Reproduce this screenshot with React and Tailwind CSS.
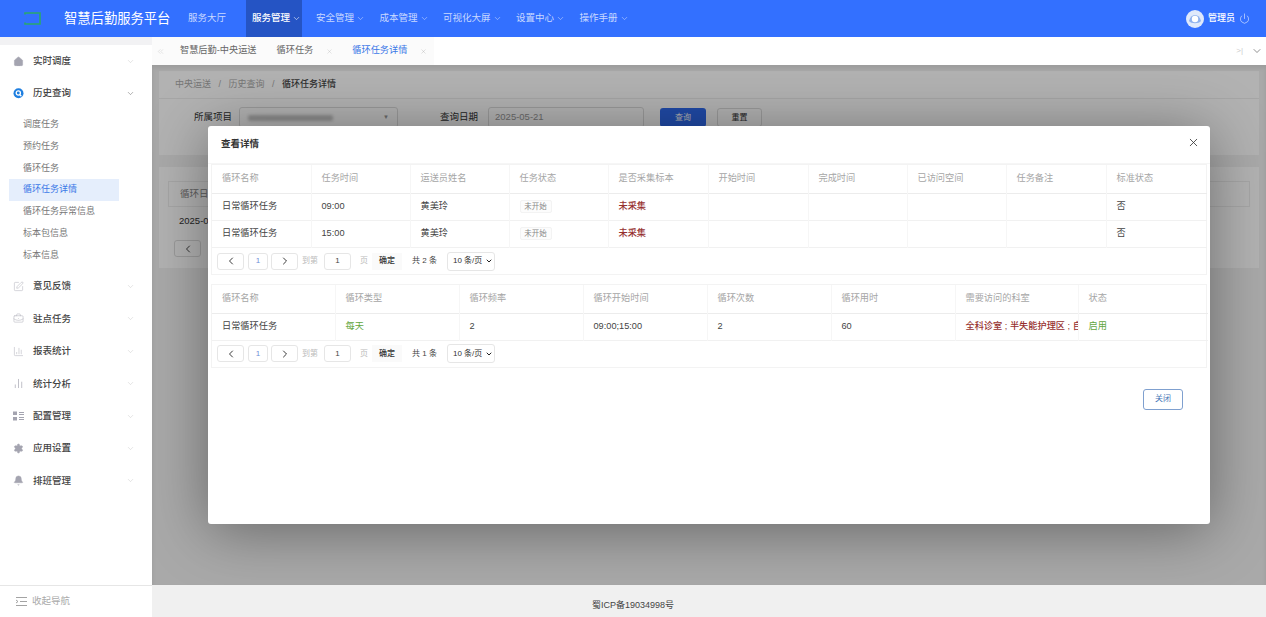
import React from "react";
import { ChevronDown, ChevronLeft, ChevronRight, X, Power, Home, SquarePen, BriefcaseBusiness, ChartColumn, ChartNoAxesColumn, Settings, Bell, ChevronsLeft } from "lucide-react";

const FONT = "font-['Liberation_Sans','Noto_Sans_CJK_SC',sans-serif]";

function Logo() {
  return (
    <svg width="17" height="13" viewBox="0 0 17 13" fill="none" stroke="#2aa86c" strokeWidth="1.6">
      <path d="M1 2.5V1h15v11H1v-1.5" />
      <path d="M2 6.5h.1" />
    </svg>
  );
}

function Avatar() {
  return (
    <svg width="18" height="18" viewBox="0 0 18 18">
      <circle cx="9" cy="9" r="9" fill="#dfe9fb" />
      <path d="M3 11c1-4 3-6 6-6s5 2 6 6c-2 3-10 3-12 0z" fill="#8fb2ee" />
      <circle cx="9" cy="9" r="3.2" fill="#ffffff" />
    </svg>
  );
}

function QueryIcon() {
  return (
    <svg width="11" height="11" viewBox="0 0 11 11">
      <circle cx="5.5" cy="5.2" r="5" fill="#1f7fe0" />
      <circle cx="5.3" cy="5" r="2.1" fill="none" stroke="#fff" strokeWidth="1.3" />
      <path d="M6.8 6.8l1.6 1.5" stroke="#fff" strokeWidth="1.2" />
    </svg>
  );
}

function NavMenu({ label, active, open }) {
  return (
    <div className={`flex h-full items-center gap-[2px] text-[9.5px] ${active ? "w-[56px] bg-[#2554c4] pl-[6px] font-medium text-white" : "text-[#c9d9ff]"}`}>
      <span>{label}</span>
      {open && <ChevronDown size={9} strokeWidth={1.5} />}
    </div>
  );
}

function SideItem({ icon, label, open }) {
  return (
    <div className="flex h-[32.4px] items-center pl-[13px] pr-[17px]">
      <span className="flex w-[20px] items-center text-[#a4a4b0]">{icon}</span>
      <span className="flex-1 text-[9.5px] font-medium text-[#444]">{label}</span>
      <ChevronDown size={9} strokeWidth={1.2} className={open ? "text-[#555]" : "text-[#c4c4c4]"} />
    </div>
  );
}

function SubItem({ label, active }) {
  return (
    <div className={`ml-[9px] flex h-[21.8px] w-[110px] items-center pl-[14px] text-[9px] ${active ? "bg-[#e5eefc] text-[#3b78e7]" : "text-[#777]"}`}>
      {label}
    </div>
  );
}

function Sidebar() {
  const s = 11;
  return (
    <aside className="flex w-[152px] shrink-0 flex-col border-t-[8px] border-[#f2f2f4] bg-white">
      <div className="flex-1">
        <SideItem icon={<Home size={s} fill="#a4a4b0" strokeWidth={1} />} label="实时调度" />
        <SideItem icon={<QueryIcon />} label="历史查询" open />
        <div className="pt-[4px]">
          <SubItem label="调度任务" />
          <SubItem label="预约任务" />
          <SubItem label="循环任务" />
          <SubItem label="循环任务详情" active />
          <SubItem label="循环任务异常信息" />
          <SubItem label="标本包信息" />
          <SubItem label="标本信息" />
        </div>
        <div className="pt-[4px]">
          <SideItem icon={<SquarePen size={s} strokeWidth={1} />} label="意见反馈" />
          <SideItem icon={<BriefcaseBusiness size={s} strokeWidth={1} />} label="驻点任务" />
          <SideItem icon={<ChartColumn size={s} strokeWidth={1} />} label="报表统计" />
          <SideItem icon={<ChartNoAxesColumn size={s} strokeWidth={1.5} />} label="统计分析" />
          <SideItem
            icon={
              <svg width="11" height="10" viewBox="0 0 11 10" fill="#a4a4b0">
                <rect x="0" y="0.5" width="4" height="3.5" />
                <rect x="0" y="6" width="4" height="3.5" />
                <rect x="6" y="1" width="5" height="1" />
                <rect x="6" y="3" width="5" height="1" />
                <rect x="6" y="6" width="5" height="1" />
                <rect x="6" y="8" width="5" height="1" />
              </svg>
            }
            label="配置管理"
          />
          <SideItem icon={<Settings size={s} fill="#a4a4b0" strokeWidth={1} />} label="应用设置" />
          <SideItem icon={<Bell size={s} fill="#a4a4b0" strokeWidth={1} />} label="排班管理" />
        </div>
      </div>
      <div className="flex h-[32px] items-center gap-[5px] border-t border-[#e6e6e6] pl-[16px] text-[9.5px] text-[#aaa]">
        <svg width="11" height="9" viewBox="0 0 11 9" fill="none" stroke="#999" strokeWidth="0.9">
          <path d="M0 .5h11M4 4.5h7M0 8.5h11M0 3l2 1.5L0 6" />
        </svg>
        <span>收起导航</span>
      </div>
    </aside>
  );
}

function Pager({ total }) {
  const box = "flex h-[17px] items-center justify-center rounded-[3px] border border-[#e6e6e6] bg-white";
  return (
    <div className="flex h-full items-center pl-[5px] text-[8px] text-[#bbb]">
      <span className={`${box} w-[27px] text-[#222]`}><ChevronLeft size={12} strokeWidth={1.8} /></span>
      <span className={`${box} ml-[4px] w-[20px] text-[#6f8fd8]`}>1</span>
      <span className={`${box} ml-[3px] w-[27px] text-[#222]`}><ChevronRight size={12} strokeWidth={1.8} /></span>
      <span className="ml-[4px] w-[22px]">到第</span>
      <span className={`${box} w-[27px] text-[#444]`}>1</span>
      <span className="ml-[9px] w-[12px]">页</span>
      <span className="flex h-[17px] w-[30px] items-center justify-center bg-[#fafafa] font-medium text-[#333]">确定</span>
      <span className="ml-[10px] w-[35px] text-[#444]">共 {total} 条</span>
      <div className="relative h-[19px] w-[48px]">
        <select className="h-full w-full appearance-none rounded-[3px] border border-[#e6e6e6] bg-white pl-[5px] text-[8px] text-[#333]">
          <option>10 条/页</option>
        </select>
        <ChevronDown size={8} strokeWidth={3} className="pointer-events-none absolute top-[5.5px] right-[2px] text-[#222]" />
      </div>
    </div>
  );
}

function DataTable({ cols, head, rows, total, widthClass }) {
  return (
    <div className={`${widthClass} mx-[3px] border border-[#f3f3f3]`}>
      <table className="w-full table-fixed border-collapse text-[9.2px]">
        <colgroup>
          {cols.map((c, i) => (
            <col key={i} className={c} />
          ))}
        </colgroup>
        <thead>
          <tr className="h-[28px] border-b border-[#ececec]">
            {head.map((h, i) => (
              <th key={i} className="border-l border-[#f6f6f6] pl-[10px] text-left font-normal text-[#a6a6a6] first:border-l-0">
                {h}
              </th>
            ))}
          </tr>
        </thead>
        <tbody>
          {rows.map((r, i) => (
            <tr key={i} className="h-[27.3px] border-b border-[#f1f1f1]">
              {r.map((c, j) => (
                <td key={j} className="overflow-hidden border-l border-[#f6f6f6] pl-[10px] whitespace-nowrap text-[#444] first:border-l-0">
                  {c}
                </td>
              ))}
            </tr>
          ))}
        </tbody>
      </table>
      <div className="h-[26px]">
        <Pager total={total} />
      </div>
    </div>
  );
}

function Tag() {
  return <span className="inline-flex h-[13px] w-[32px] items-center justify-center rounded-[2px] border border-[#f3f3f3] bg-[#fcfcfc] text-[7.5px] text-[#888]">未开始</span>;
}
const Red = ({ children }) => <span className="font-medium text-[#96302e]">{children}</span>;
const Green = ({ children }) => <span className="text-[#62a63e]">{children}</span>;

function Modal() {
  const c1 = ["w-[99px]", "w-[99px]", "w-[99px]", "w-[99px]", "w-[100px]", "w-[100px]", "w-[99px]", "w-[99px]", "w-[100px]", "w-[101px]"];
  const c2 = ["w-[123px]", "w-[124px]", "w-[124px]", "w-[124px]", "w-[124px]", "w-[124px]", "w-[123px]", "w-[130px]"];
  const task = (t) => ["日常循环任务", t, "黄美玲", <Tag />, <Red>未采集</Red>, "", "", "", "", "否"];
  return (
    <div className="absolute top-[61px] left-[56px] flex h-[398px] w-[1002px] flex-col rounded-[3px] bg-white shadow-[0_6px_60px_rgba(0,0,0,0.4)]">
      <div className="flex h-[38px] shrink-0 items-center justify-between border-b border-[#f6f6f6] pr-[10px] pl-[13px]">
        <span className="text-[9.5px] font-semibold text-[#333]">查看详情</span>
        <X size={13} strokeWidth={1.5} className="mb-[4px] text-[#333]" />
      </div>
      <DataTable
        widthClass="w-[996px]"
        cols={c1}
        head={["循环名称", "任务时间", "运送员姓名", "任务状态", "是否采集标本", "开始时间", "完成时间", "已访问空间", "任务备注", "标准状态"]}
        rows={[task("09:00"), task("15:00")]}
        total={2}
      />
      <div className="h-[9px] shrink-0" />
      <DataTable
        widthClass="w-[996px]"
        cols={c2}
        head={["循环名称", "循环类型", "循环频率", "循环开始时间", "循环次数", "循环用时", "需要访问的科室", "状态"]}
        rows={[["日常循环任务", <Green>每天</Green>, "2", "09:00;15:00", "2", "60", <Red>全科诊室 ; 半失能护理区 ; 自</Red>, <Green>启用</Green>]]}
        total={1}
      />
      <div className="flex justify-end pt-[21px] pr-[27px]">
        <button className="h-[21px] w-[40px] rounded-[3px] border border-[#7fa0cf] bg-white text-[8px] text-[#4a78b8]">关闭</button>
      </div>
    </div>
  );
}

function Under() {
  return (
    <div className="flex h-full flex-col bg-[#f2f2f2] px-[7px] pt-[6px] text-[#333]">
      <div className="h-[84px] bg-white">
        <div className="flex h-[28px] items-center border-b border-[#eee] pl-[16px] text-[9px] text-[#aaa]">
          <span className="whitespace-pre">中央运送   /   历史查询   /   </span>
          <span className="font-medium text-[#444]">循环任务详情</span>
        </div>
        <div className="flex items-center pt-[8px] pl-[35px] text-[9.5px]">
          <span>所属项目</span>
          <div className="ml-[7px] flex h-[21px] w-[159px] items-center justify-between rounded-[3px] border border-[#ddd] px-[8px]">
            <span className="h-[6px] w-[85px] rounded-[2px] bg-[#c8c8c8] blur-[1.5px]" />
            <span className="text-[6px] text-[#999]">▼</span>
          </div>
          <span className="ml-[42px]">查询日期</span>
          <div className="ml-[10px] flex h-[21px] w-[156px] items-center rounded-[3px] border border-[#ddd] pl-[6px] text-[#999]">2025-05-21</div>
          <span className="ml-[16px] flex h-[19px] w-[46px] items-center justify-center rounded-[3px] bg-[#2f6bf0] text-[8px] text-white">查询</span>
          <span className="ml-[11px] flex h-[19px] w-[45px] items-center justify-center rounded-[3px] border border-[#ddd] text-[8px]">重置</span>
        </div>
      </div>
      <div className="mt-[12px] h-[101px] bg-white px-[9px] pt-[14px] text-[9.5px]">
        <div className="flex h-[26px] items-center border border-[#eee] pl-[11px] text-[#888]">循环日</div>
        <div className="flex h-[27px] items-center pt-[2px] pl-[11px]">2025-05-21</div>
        <span className="mt-[6px] ml-[6px] flex h-[17px] w-[27px] items-center justify-center rounded-[3px] border border-[#ddd]"><ChevronLeft size={12} strokeWidth={1.8} /></span>
      </div>
    </div>
  );
}

export default function App() {
  return (
    <div className={`${FONT} flex h-[617px] w-[1266px] flex-col overflow-hidden bg-white`}>
      <header className="flex h-[37px] shrink-0 items-center bg-[#3370ff] pr-[16px] text-white">
        <div className="flex w-[54px] justify-end pr-[13px]"><Logo /></div>
        <div className="ml-[10px] w-[124px] text-[13.3px] text-white">智慧后勤服务平台</div>
        <nav className="flex h-full items-center">
          <div className="flex h-full w-[58px] items-center"><NavMenu label="服务大厅" /></div>
          <NavMenu label="服务管理" active open />
          <div className="ml-[14px] flex h-full items-center gap-[14.5px]">
            <NavMenu label="安全管理" open />
            <NavMenu label="成本管理" open />
            <NavMenu label="可视化大屏" open />
            <NavMenu label="设置中心" open />
            <NavMenu label="操作手册" open />
          </div>
        </nav>
        <div className="ml-auto flex items-center gap-[4px]">
          <Avatar />
          <span className="text-[9px] font-medium">管理员</span>
          <Power size={11} strokeWidth={1.2} />
        </div>
      </header>
      <div className="flex min-h-0 flex-1">
        <Sidebar />
        <div className="flex min-w-0 flex-1 flex-col">
          <div className="flex h-[28px] shrink-0 items-center bg-white text-[9.2px]">
            <div className="flex h-full w-[282px] items-center bg-[#fbfbfb]">
              <ChevronsLeft size={9} strokeWidth={1} className="ml-[4px] text-[#bbb]" />
              <span className="ml-[15px] text-[#666]">智慧后勤-中央运送</span>
              <span className="ml-[20px] text-[#666]">循环任务</span>
              <X size={7} strokeWidth={1} className="ml-[13px] text-[#aaa]" />
              <span className="ml-[19px] text-[#3b78e7]">循环任务详情</span>
              <X size={7} strokeWidth={1} className="ml-[13px] text-[#999]" />
            </div>
            <div className="ml-auto flex items-center pr-[3px]">
              <span className="text-[8px] text-[#ccc]">&gt;|</span>
              <ChevronDown size={12} strokeWidth={1.3} className="ml-[8px] text-[#555]" />
            </div>
          </div>
          <main className="relative min-h-0 flex-1 overflow-hidden">
            <Under />
            <div className="absolute inset-0 bg-black/30 shadow-[inset_0_3px_4px_rgba(0,0,0,0.08)]" />
            <Modal />
          </main>
          <footer className="flex h-[32px] shrink-0 items-center justify-center bg-[#f0f0f0] pt-[10px] pr-[152px] text-[9px] text-[#444]">蜀ICP备19034998号</footer>
        </div>
      </div>
    </div>
  );
}
